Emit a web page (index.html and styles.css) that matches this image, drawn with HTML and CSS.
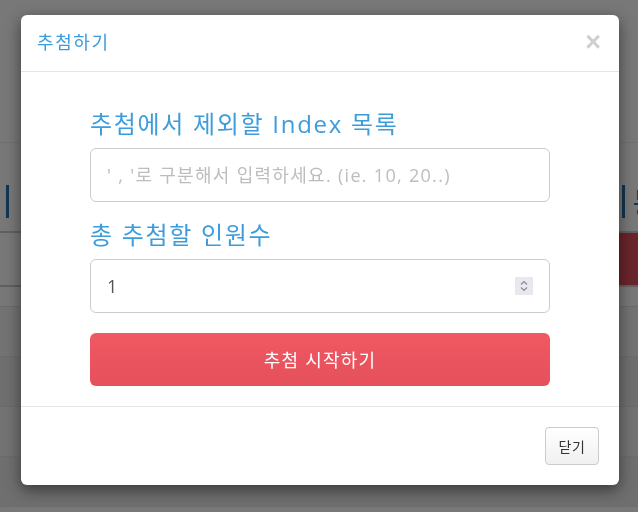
FILE: index.html
```html
<!DOCTYPE html>
<html lang="ko">
<head>
<meta charset="utf-8">
<title>추첨하기</title>
<link rel="stylesheet" href="styles.css">
</head>
<body>
<div class="page">
  <div class="top"></div>
  <div class="hero">
    <span class="hero-bar"></span>
    <span class="hero-right"><span class="hero-bar"></span><span class="hero-text">등</span></span>
  </div>
  <div class="action-row"><span class="red-btn"></span></div>
  <div class="table">
    <div class="trow head"></div>
    <div class="trow"></div>
    <div class="trow alt"></div>
    <div class="trow"></div>
    <div class="trow alt"></div>
  </div>
</div>
<div class="backdrop"></div>
<div class="modal">
  <div class="modal-header">
    <h4 class="modal-title">추첨하기</h4>
    <span class="close">&times;</span>
  </div>
  <div class="modal-body">
    <div class="form-group">
      <label class="label">추첨에서 제외할 Index 목록</label>
      <div class="field"><input class="field-input" type="text" placeholder="' , '로 구분해서 입력하세요. (ie. 10, 20..)"></div>
    </div>
    <div class="form-group">
      <label class="label">총 추첨할 인원수</label>
      <div class="field">
        <input class="field-input value" type="text" value="1">
        <span class="spinner">
          <svg width="18" height="18" viewBox="0 0 18 18"><path d="M6 7.5 L9 4.5 L12 7.5" fill="none" stroke="#8a8a96" stroke-width="1.2"/><path d="M6 10.5 L9 13.5 L12 10.5" fill="none" stroke="#8a8a96" stroke-width="1.2"/></svg>
        </span>
      </div>
    </div>
    <button class="start-btn">추첨 시작하기</button>
  </div>
  <div class="modal-footer">
    <button class="close-btn">닫기</button>
  </div>
</div>
</body>
</html>
```
FILE: styles.css
```css
html, body {
  margin: 0;
  padding: 0;
  background: #fff;
  font-family: "Open Sans", "Noto Sans CJK KR", sans-serif;
  overflow: hidden;
}
.page {
  width: 638px;
  height: 512px;
}
.top {
  height: 143px;
  border-bottom: 1px solid #eee;
  box-sizing: border-box;
}
.hero {
  height: 90px;
  display: flex;
  justify-content: space-between;
  align-items: center;
  padding: 28px 0 0 6px;
  border-bottom: 2px solid #ccc;
  box-sizing: border-box;
  overflow: hidden;
  color: #2a6fa8;
}
.hero-bar {
  width: 3px;
  height: 33px;
  background: #2a6fa8;
}
.hero-right {
  display: flex;
  align-items: center;
  gap: 7px;
  margin-right: -22px;
}
.hero-text {
  font-family: "Noto Sans CJK KR", sans-serif;
  font-size: 30px;
  line-height: 1;
}
.action-row {
  height: 54px;
  display: flex;
  justify-content: flex-end;
  border-bottom: 2px solid #ccc;
  box-sizing: border-box;
}
.red-btn {
  width: 19px;
  background: #e0505c;
}
.trow {
  height: 50px;
  border-bottom: 1px solid #e6e6e6;
  box-sizing: border-box;
  background: #f4f4f4;
}
.trow.head { height: 20px; background: #fff; }
.trow.alt { background: #ececec; }

.backdrop {
  position: fixed;
  inset: 0;
  background: rgba(0, 0, 0, 0.53);
}
.modal {
  position: absolute;
  left: 21px;
  top: 15px;
  width: 598px;
  background: #fff;
  border-radius: 6px;
  box-shadow: 0 5px 15px rgba(0, 0, 0, 0.5);
  overflow: hidden;
}
.modal-header {
  height: 57px;
  box-sizing: border-box;
  border-bottom: 1px solid #e5e5e5;
  display: flex;
  align-items: center;
  justify-content: space-between;
  padding: 0 18px 0 16px;
}
.modal-title {
  margin: 0;
  font-size: 18px;
  letter-spacing: 1.6px;
  font-weight: normal;
  color: #3d9ddc;
  line-height: 1;
  padding-bottom: 3px;
}
.close {
  font-family: "Liberation Sans", sans-serif;
  font-size: 27px;
  font-weight: bold;
  color: #cfcfcf;
  line-height: 1;
  padding-bottom: 1px;
}
.modal-body {
  padding: 35px 69px 20px;
}
.form-group {
  margin-bottom: 16px;
}
.label {
  display: block;
  font-size: 24px;
  letter-spacing: 1.7px;
  line-height: 34px;
  color: #3d9ddc;
  margin-bottom: 7px;
}
.field {
  height: 54px;
  box-sizing: border-box;
  border: 1px solid #ccc;
  border-radius: 6px;
  display: flex;
  align-items: center;
  padding: 0 16px;
}
.field-input {
  flex: 1;
  border: 0;
  outline: 0;
  padding: 0;
  font-family: "Open Sans", "Noto Sans CJK KR", sans-serif;
  font-size: 18px;
  letter-spacing: 1.3px;
  color: #555;
  background: transparent;
  min-width: 0;
}
.field-input::placeholder { color: #bdbdbd; }
.spinner {
  width: 18px;
  height: 18px;
  background: #e8e8ee;
  display: flex;
}
.start-btn {
  display: block;
  width: 100%;
  height: 53px;
  margin-top: 20px;
  border: 0;
  border-radius: 6px;
  background: linear-gradient(#f15862, #e4505b);
  color: #fff;
  font-family: "Open Sans", "Noto Sans CJK KR", sans-serif;
  font-size: 18px;
  letter-spacing: 1.2px;
  padding: 0 0 2px;
}
.modal-footer {
  border-top: 1px solid #e5e5e5;
  padding: 20px;
  display: flex;
  justify-content: flex-end;
}
.close-btn {
  height: 38px;
  width: 54px;
  border: 1px solid #ccc;
  border-radius: 4px;
  background: linear-gradient(#fff, #f0f0f0);
  color: #333;
  font-family: "Open Sans", "Noto Sans CJK KR", sans-serif;
  font-size: 14px;
  letter-spacing: 0.5px;
  padding: 0;
}
```
